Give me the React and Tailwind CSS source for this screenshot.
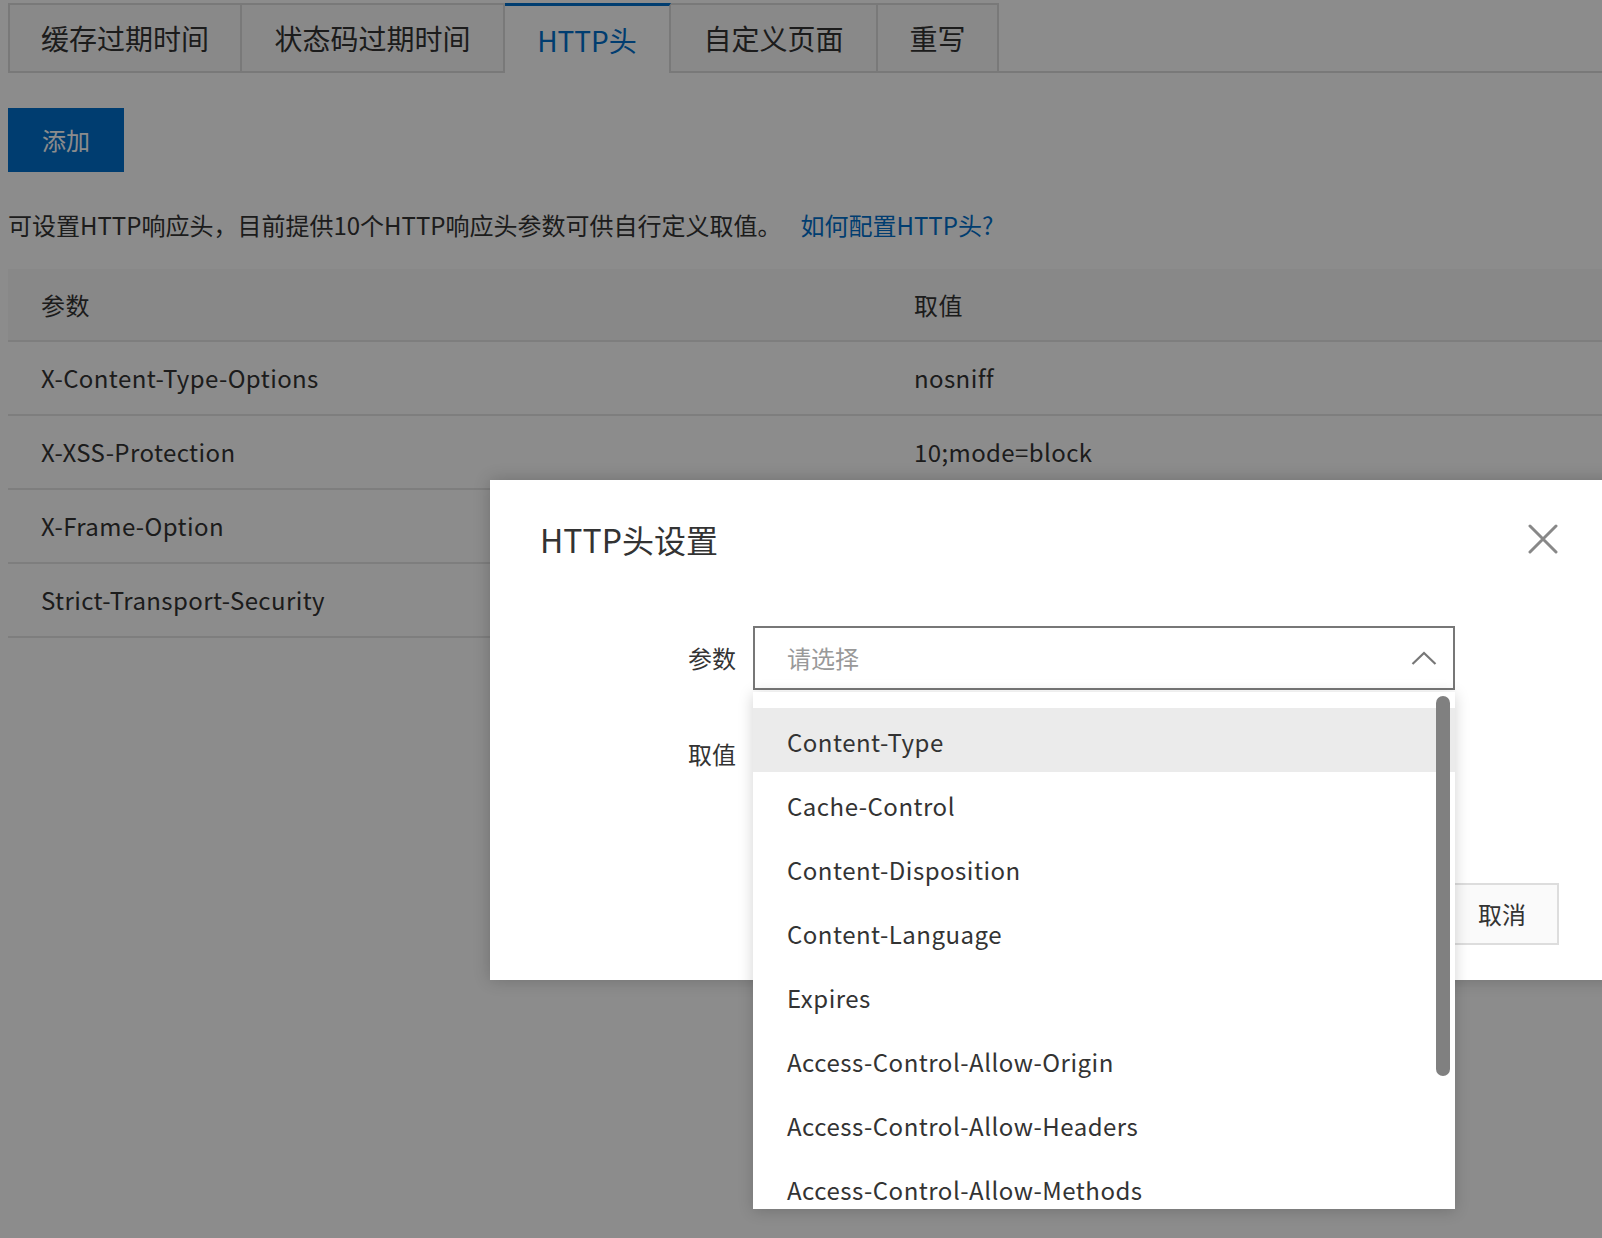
const tabs = [
  { label: "缓存过期时间", w: "w-[234px]" },
  { label: "状态码过期时间", w: "w-[263px]" },
  { label: "HTTP头", w: "w-[166px]", active: true },
  { label: "自定义页面", w: "w-[207px]" },
  { label: "重写", w: "w-[121px]" },
];

const rows = [
  ["X-Content-Type-Options", "nosniff"],
  ["X-XSS-Protection", "10;mode=block"],
  ["X-Frame-Option", "SAMEORIGIN"],
  ["Strict-Transport-Security", "max-age=31536000"],
];

const options = [
  "Content-Type",
  "Cache-Control",
  "Content-Disposition",
  "Content-Language",
  "Expires",
  "Access-Control-Allow-Origin",
  "Access-Control-Allow-Headers",
  "Access-Control-Allow-Methods",
];

export default function App() {
  return (
    <div className="relative w-[1602px] h-[1238px] overflow-hidden bg-white text-[#333] font-['Noto_Sans_CJK_SC',sans-serif]">
      {/* 页面内容 */}
      <div className="pl-2 pt-[3px]">
        <div className="flex">
          {tabs.map((t) => (
            <div
              key={t.label}
              className={`${t.w} h-[70px] flex items-center justify-center text-[28px] border-r-2 first:border-l-2 ${
                t.active
                  ? "border-t-[3px] border-t-[#0070cc] border-r-[#ddd] text-[#0070cc] bg-white"
                  : "border-t-2 border-b-2 border-[#ddd] bg-[#fafafa]"
              }`}
            >
              {t.label}
            </div>
          ))}
          <div className="flex-1 border-b-2 border-[#ddd]" />
        </div>

        <button className="mt-[35px] w-[116px] h-[64px] bg-[#0070cc] text-white text-[24px]">
          添加
        </button>

        <p className="mt-[38px] text-[24px] leading-[30px]">
          可设置HTTP响应头，目前提供10个HTTP响应头参数可供自行定义取值。
          <a className="ml-[19px] text-[#0070cc]">如何配置HTTP头?</a>
        </p>

        <div className="mt-[29px] text-[24px] tracking-[0.4px]">
          <div className="flex items-center h-[73px] bg-[#f7f7f7] border-b-2 border-[#e5e5e5]">
            <div className="w-[873px] pl-[33px]">参数</div>
            <div className="pl-[33px]">取值</div>
          </div>
          {rows.map(([k, v]) => (
            <div key={k} className="flex items-center h-[74px] border-b-2 border-[#e5e5e5]">
              <div className="w-[873px] pl-[33px]">{k}</div>
              <div className="pl-[33px]">{v}</div>
            </div>
          ))}
        </div>
      </div>

      {/* 遮罩 */}
      <div className="absolute inset-0 bg-black/45" />

      {/* 弹窗 */}
      <div className="absolute left-[490px] top-[480px] w-[1160px] h-[500px] bg-white shadow-[0_0_16px_rgba(0,0,0,0.2)]">
        <div className="flex items-center justify-between w-[1068px] h-[118px] pl-[50px]">
          <h2 className="text-[32px]">HTTP头设置</h2>
          <button className="w-[30px] h-[30px] flex items-center justify-center">
            <svg width="30" height="30" viewBox="0 0 30 30" fill="none" stroke="#888" strokeWidth="3" strokeLinecap="round">
              <path d="M2 2L28 28M28 2L2 28" />
            </svg>
          </button>
        </div>

        <div className="mt-[28px] flex items-center">
          <label className="w-[246px] text-right text-[24px]">参数</label>
          <div className="ml-[17px] w-[702px] h-[64px] border-2 border-[#777] flex items-center justify-between pl-[32px] pr-[16px]">
            <span className="text-[24px] text-[#999]">请选择</span>
            <svg width="26" height="14" viewBox="0 0 26 14" fill="none" stroke="#777" strokeWidth="2.2">
              <path d="M1.5 13L13 2L24.5 13" />
            </svg>
          </div>
        </div>

        <div className="mt-[32px] flex items-center">
          <label className="w-[246px] text-right text-[24px]">取值</label>
          <div className="ml-[17px] w-[702px] h-[64px] border-2 border-[#ddd]" />
        </div>

        <div className="mt-[97px] flex gap-[16px] pl-[825px]">
          <button className="w-[114px] h-[62px] bg-[#0070cc] text-white text-[24px]">确定</button>
          <button className="w-[114px] h-[62px] border-2 border-[#ddd] bg-[#fafafa] text-[24px]">取消</button>
        </div>
      </div>

      {/* 下拉菜单 */}
      <div className="absolute left-[753px] top-[692px] w-[702px] h-[517px] overflow-hidden bg-white shadow-[0_2px_14px_rgba(0,0,0,0.18)]">
        <ul className="pt-[16px]">
          {options.map((o, i) => (
            <li
              key={o}
              className={`h-[64px] flex items-center pl-[34px] pt-[4px] text-[24px] tracking-[0.5px] ${i === 0 ? "bg-[#ebebeb]" : ""}`}
            >
              {o}
            </li>
          ))}
        </ul>
        <div className="absolute right-[5px] top-[4px] w-[14px] h-[380px] rounded-full bg-[#808080]" />
      </div>
    </div>
  );
}
